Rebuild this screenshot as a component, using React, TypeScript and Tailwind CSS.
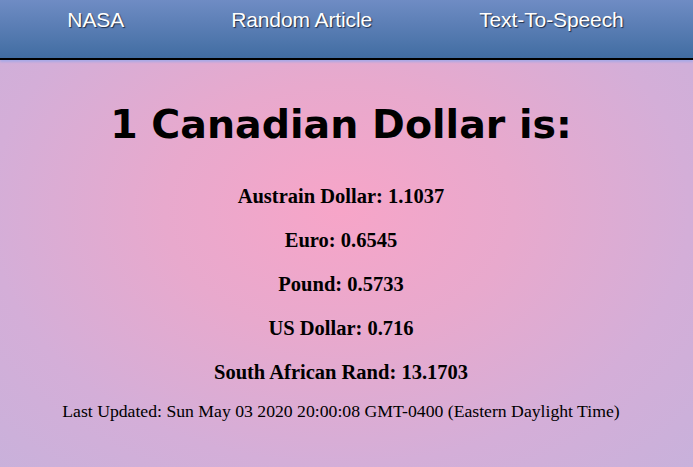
export default function App() {
  const rates = [
    ["Austrain Dollar", "1.1037"],
    ["Euro", "0.6545"],
    ["Pound", "0.5733"],
    ["US Dollar", "0.716"],
    ["South African Rand", "13.1703"],
  ];

  return (
    <div className="min-h-[467px] w-full bg-[radial-gradient(ellipse_at_49%_45%,#f7a5c8_0%,#e8a9cd_35%,#d4aed8_70%,#c8b1db_100%)]">
      {/* top nav */}
      <nav className="h-[60px] border-b-2 border-black bg-gradient-to-b from-[#6f8cc4] to-[#416da2] shadow-[0_2px_2px_#a9a9e6]">
        <ul className="flex justify-center gap-[107px] pt-[8px] pr-[2px] font-['Liberation_Sans',Arial,sans-serif] text-[21px] leading-[23px] tracking-[-0.1px] text-white [text-shadow:1px_1px_1px_#1f2f4a]">
          <li>NASA</li>
          <li>Random Article</li>
          <li>Text-To-Speech</li>
        </ul>
      </nav>

      <main className="flex flex-col items-center pr-[11px] pt-[36px] text-black">
        <h1 className="font-['Comic_Sans_MS','DejaVu_Sans',sans-serif] text-[39.5px] font-bold leading-[56px]">
          1 Canadian Dollar is:
        </h1>

        <div className="mt-[32px] flex flex-col items-center gap-[20px] font-['Liberation_Serif','Times_New_Roman',serif] text-[20.5px] font-bold leading-[24px]">
          {rates.map(([name, value]) => (
            <h3 key={name}>
              {name}: {value}
            </h3>
          ))}
        </div>

        <p className="mt-[17px] font-['Liberation_Serif','Times_New_Roman',serif] text-[17.7px] leading-[21px]">
          Last Updated: Sun May 03 2020 20:00:08 GMT-0400 (Eastern Daylight Time)
        </p>
      </main>
    </div>
  );
}
